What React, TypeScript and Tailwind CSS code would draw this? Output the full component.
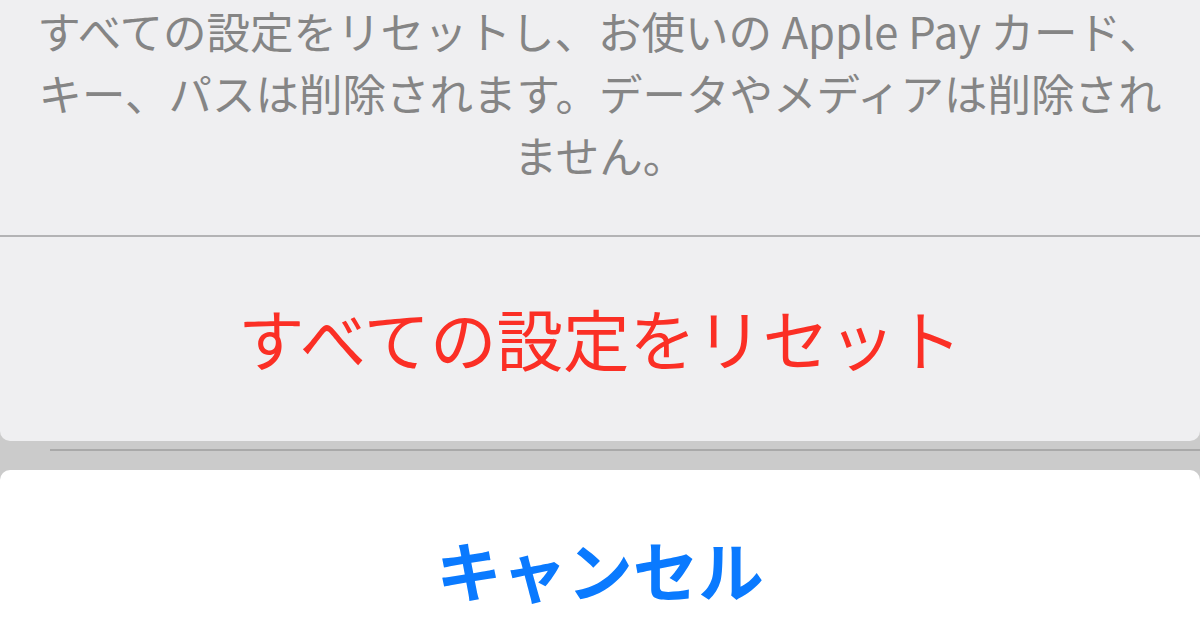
const jp = { fontFamily: '"Noto Sans CJK JP", "Noto Sans", sans-serif' };

export default function App() {
    return (
        <div className="flex h-[630px] w-[1200px] flex-col overflow-hidden bg-[#cbcbcb]" style={jp}>
            <div className="flex h-[441px] flex-col rounded-b-[10px] bg-[#efeff1]">
                <p className="text-center text-[43.5px] leading-[62px] text-[#858585]">
                    すべての設定をリセットし、お使いの Apple Pay カード、
                    <br />
                    キー、パスは削除されます。データやメディアは削除され
                    <br />
                    ません。
                </p>
                <div className="mt-[49px] h-[2px] bg-[#b3b3b5]" />
                <button className="flex flex-1 items-center justify-center pb-[2px] text-[66.5px] text-[#fb2f25]">
                    すべての設定をリセット
                </button>
            </div>
            <div className="h-[29px] pl-[50px] pt-[8px]">
                <div className="h-[2px] bg-[#a9a9a9]" />
            </div>
            <div className="flex flex-1 items-start justify-center rounded-t-[10px] bg-white pt-[64px]">
                <span className="text-[65.5px] font-bold leading-[70px] text-[#0a7aff]">キャンセル</span>
            </div>
        </div>
    );
}
